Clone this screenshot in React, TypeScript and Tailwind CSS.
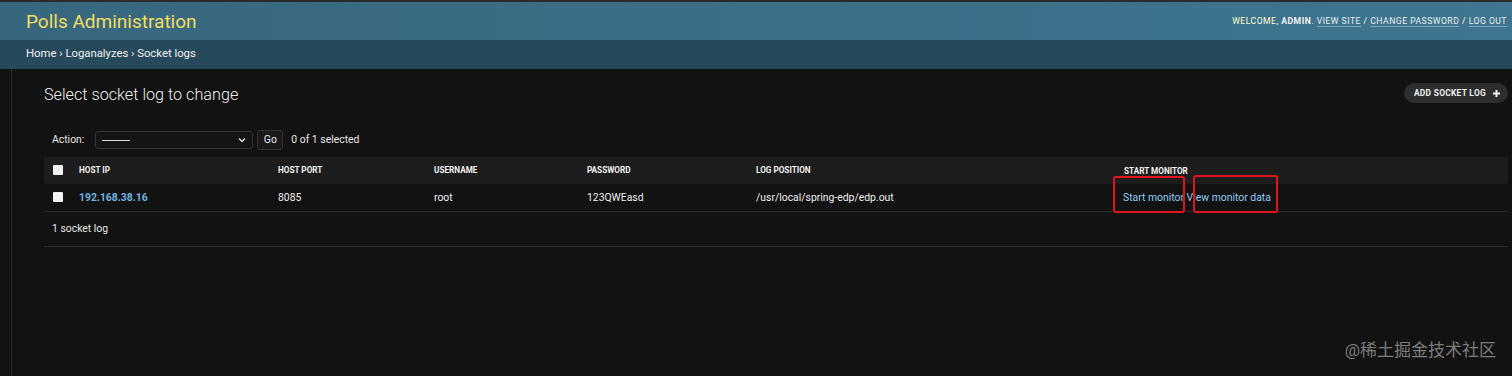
import React from "react";

const font = { fontFamily: "Roboto, 'Noto Sans CJK SC', sans-serif" };

function Checkbox() {
  return <span className="inline-block h-[10px] w-[10px] rounded-[1px] bg-[#f2f2f2]" />;
}

export default function App() {
  const cols = "grid grid-cols-[27px_199px_156px_153px_169px_368px_1fr]";
  return (
    <div style={font} className="relative h-[376px] w-[1512px] overflow-hidden bg-[#121212] text-[#eeeeee]">
      <div className="h-[2px] bg-[#2b2b2b]" />
      <header className="flex h-[38px] items-center justify-between bg-gradient-to-r from-[#37677e] to-[#3f7590] pl-[26px] pr-[5px]">
        <h1 className="text-[19px] font-normal leading-none text-[#f5dd5d]">Polls Administration</h1>
        <div className="text-[8.6px] uppercase tracking-[0.5px] text-[#ffffcc]">
          Welcome, <strong className="font-bold text-[#f5f5f5]">admin</strong>.{" "}
          <a className="border-b border-[#7ea4b8] text-[#eaf0f0]">View site</a> /{" "}
          <a className="border-b border-[#7ea4b8] text-[#eaf0f0]">Change password</a> /{" "}
          <a className="border-b border-[#7ea4b8] text-[#eaf0f0]">Log out</a>
        </div>
      </header>
      <nav className="flex h-[29px] items-center bg-[#264a5c] pl-[26px] text-[11.3px] text-[#f0f0f0]">
        Home › Loganalyzes › Socket logs
      </nav>
      <div className="flex">
        <div className="h-[307px] w-[12px] border-r border-[#2a2a2a]" />
        <main className="flex-1 pl-[32px] pr-[4px]">
          <div className="flex items-start justify-between pt-[14px]">
            <h2 className="text-[16.2px] font-light leading-[24px] text-[#eeeeee]">Select socket log to change</h2>
            <button className="flex h-[20px] items-center gap-[6px] rounded-full bg-[#2e2e2e] pl-[10px] pr-[7px] text-[8.4px] font-bold uppercase tracking-[0.3px] text-[#eeeeee]">
              Add socket log
              <svg width="9" height="9" viewBox="0 0 10 10">
                <path d="M5 1v8M1 5h8" stroke="#f2f2f2" strokeWidth="2.2" />
              </svg>
            </button>
          </div>
          <div className="mt-[24px] flex h-[18px] items-center pl-[8px] text-[10.4px] text-[#e6e6e6]">
            <span>Action:</span>
            <div className="ml-[11px] flex h-[18px] w-[158px] items-center justify-between rounded-[3px] border border-[#333333] bg-[#141414] px-[6px]">
              <span className="h-px w-[28px] bg-[#e0e0e0]" />
              <svg width="8" height="6" viewBox="0 0 8 6">
                <path d="M1 1.5l3 3 3-3" fill="none" stroke="#e0e0e0" strokeWidth="1.4" />
              </svg>
            </div>
            <button className="ml-[4px] flex h-[20px] w-[26px] items-center justify-center rounded-[3px] border border-[#333333] bg-[#1a1a1a] text-[10.4px]">
              Go
            </button>
            <span className="ml-[8px]">0 of 1 selected</span>
          </div>
          <div className="relative mt-[8px]">
            <div className={`${cols} h-[27px] items-center rounded-[2px] bg-[#1d1d1d] text-[8.2px] font-bold uppercase text-[#f0f0f0]`}>
              <div className="flex items-center pl-[9px] pb-[1px]">
                <Checkbox />
              </div>
              <div className="pl-[8px]">Host ip</div>
              <div className="pl-[8px]">Host port</div>
              <div className="pl-[8px]">Username</div>
              <div className="pl-[8px]">Password</div>
              <div className="pl-[8px]">Log position</div>
              <div className="pl-[8px] self-start pt-[8px]">Start monitor</div>
            </div>
            <div className={`${cols} h-[28px] items-center border-b border-[#2a2a2a] text-[10.4px] text-[#eeeeee]`}>
              <div className="flex items-center pl-[9px] pb-[2px]">
                <Checkbox />
              </div>
              <div className="pl-[8px] font-bold text-[#6fb6e4]">192.168.38.16</div>
              <div className="pl-[8px]">8085</div>
              <div className="pl-[8px]">root</div>
              <div className="pl-[8px]">123QWEasd</div>
              <div className="pl-[8px]">/usr/local/spring-edp/edp.out</div>
              <div className="pl-[7px] text-[#8fcdf2]">
                <a>Start monitor</a> <a>View monitor data</a>
              </div>
            </div>
            <div className="flex h-[35px] items-center border-b border-[#2a2a2a] pl-[8px] text-[10.4px] text-[#e6e6e6]">
              1 socket log
            </div>
            <div className="absolute left-[1069px] top-[19px] h-[37px] w-[72px] rounded-[3px] border-2 border-[#e0141b]" />
            <div className="absolute left-[1149px] top-[18px] h-[38px] w-[85px] rounded-[3px] border-2 border-[#e0141b]" />
          </div>
        </main>
      </div>
      <div className="absolute right-[16px] top-[338px] text-[17px] text-[#7c7c7c]">@稀土掘金技术社区</div>
    </div>
  );
}
